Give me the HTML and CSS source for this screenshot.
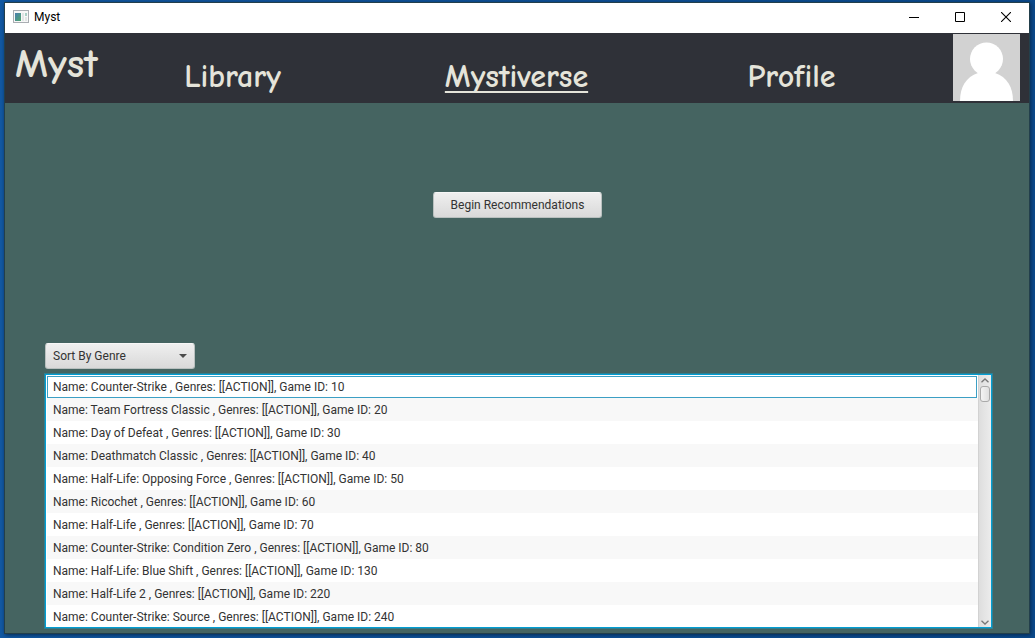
FILE: index.html
```
<!DOCTYPE html>
<html lang="en">
<head>
<meta charset="utf-8">
<title>Myst</title>
<link rel="stylesheet" href="styles.css">
</head>
<body>
<div class="window">
  <header class="titlebar">
    <svg class="app-icon" width="16" height="16" viewBox="0 0 16 16" aria-hidden="true">
      <defs><linearGradient id="pane" x1="0" y1="0" x2="1" y2="1"><stop offset="0" stop-color="#4a7fb0"/><stop offset="1" stop-color="#4fa66c"/></linearGradient></defs>
      <rect x=".5" y="1.500" width="15" height="12" fill="#f7f7f7" stroke="#a9adb2"/>
      <rect x="2" y="4" width="6" height="8" fill="url(#pane)"/>
      <rect x="9" y="4" width="2" height="8" fill="#e1e5e5"/>
      <rect x="12" y="4" width="2" height="3" fill="#a9cfc6"/>
      <rect x="12" y="8" width="2" height="4" fill="#e1e5e5"/>
    </svg>
    <span class="title">Myst</span>
    <button class="caption" aria-label="Minimize"><svg width="10" height="10" viewBox="0 0 10 10"><path d="M0 5.5h10" stroke="#000"/></svg></button>
    <button class="caption" aria-label="Maximize"><svg width="10" height="10" viewBox="0 0 10 10"><path d="M.5.5h9v9h-9z" fill="none" stroke="#000"/></svg></button>
    <button class="caption" aria-label="Close"><svg width="10" height="10" viewBox="0 0 10 10"><path d="M0 0l10 10M10 0L0 10" stroke="#000" stroke-width="1.1"/></svg></button>
  </header>
  <nav class="nav">
    <span class="brand">Myst</span>
    <a class="link" href="#library">Library</a>
    <a class="link active" href="#mystiverse">Mystiverse</a>
    <a class="link" href="#profile">Profile</a>
    <svg class="avatar" width="67" height="67" viewBox="0 0 67 67" role="img" aria-label="Profile picture">
      <rect width="67" height="67" fill="#d2d2d2"/>
      <circle cx="33.5" cy="25" r="16.5" fill="#fff"/>
      <path d="M25 39C13 43 7 53 7 67h53C60 53 54 43 42 39z" fill="#fff"/>
    </svg>
  </nav>
  <main class="content">
    <section class="start"><button class="begin">Begin Recommendations</button></section>
    <div class="sort">
      <select class="sort-select" aria-label="Sort games"><option>Sort By Genre</option></select>
      <svg class="sort-arrow" width="8" height="4" viewBox="0 0 8 4" aria-hidden="true"><path d="M0 0h8L4 4z" fill="#4b4b4b"/></svg>
    </div>
    <div class="list">
      <ul class="rows">
        <li class="row selected">Name: Counter-Strike , Genres: [[ACTION]], Game ID: 10</li>
        <li class="row">Name: Team Fortress Classic , Genres: [[ACTION]], Game ID: 20</li>
        <li class="row">Name: Day of Defeat , Genres: [[ACTION]], Game ID: 30</li>
        <li class="row">Name: Deathmatch Classic , Genres: [[ACTION]], Game ID: 40</li>
        <li class="row">Name: Half-Life: Opposing Force , Genres: [[ACTION]], Game ID: 50</li>
        <li class="row">Name: Ricochet , Genres: [[ACTION]], Game ID: 60</li>
        <li class="row">Name: Half-Life , Genres: [[ACTION]], Game ID: 70</li>
        <li class="row">Name: Counter-Strike: Condition Zero , Genres: [[ACTION]], Game ID: 80</li>
        <li class="row">Name: Half-Life: Blue Shift , Genres: [[ACTION]], Game ID: 130</li>
        <li class="row">Name: Half-Life 2 , Genres: [[ACTION]], Game ID: 220</li>
        <li class="row">Name: Counter-Strike: Source , Genres: [[ACTION]], Game ID: 240</li>
      </ul>
      <div class="scrollbar">
        <button class="step" aria-label="Scroll up"><svg width="8" height="5" viewBox="0 0 8 5"><path d="M.5 4.2L4 1l3.500 3.200" fill="none" stroke="#777" stroke-width="1.300"/></svg></button>
        <div class="track"><div class="thumb"></div></div>
        <button class="step" aria-label="Scroll down"><svg width="8" height="5" viewBox="0 0 8 5"><path d="M.5.8L4 4 7.500.8" fill="none" stroke="#777" stroke-width="1.300"/></svg></button>
      </div>
    </div>
  </main>
</div>
</body>
</html>
```
FILE: styles.css
```
* { box-sizing: border-box; }
body {
  margin: 0;
  height: 100vh;
  padding: 3px 6px 5px 5px;
  background: linear-gradient(90deg, #1259a3, #0b4a8c);
  font-family: "Segoe UI", Roboto, "Noto Sans", sans-serif;
  font-size: 12px;
  color: #333;
}
button, select { font: inherit; color: inherit; }
.window {
  height: 100%;
  display: flex;
  flex-direction: column;
  background: #456461;
  box-shadow: 0 0 0 1px #233f4b, 1px 1px 4px 1px #06294f;
}
.titlebar {
  height: 30px;
  flex: none;
  display: flex;
  align-items: center;
  padding: 0 0 2px 8px;
  background: #fff;
  color: #000;
}
.title { flex: 1; padding-left: 5px; }
.caption {
  width: 46px;
  height: 28px;
  padding: 0;
  border: 0;
  background: none;
  display: flex;
  align-items: center;
  justify-content: center;
}
.nav {
  height: 70px;
  flex: none;
  display: grid;
  grid-template-columns: 83px 269fr 299fr 251fr 36fr 67px;
  padding: 1px 9px 0 10px;
  background: #2f3138;
  color: #e5e4da;
  font-family: "Comic Sans MS", "Comic Neue", Lato, sans-serif;
  font-weight: 700;
}
.brand { font-size: 41px; line-height: 60px; }
.link {
  justify-self: center;
  align-self: start;
  padding-top: 25px;
  font-size: 32px;
  line-height: 36px;
  color: inherit;
  text-decoration: none;
}
.active {
  text-decoration: underline;
  text-decoration-thickness: 2px;
  text-underline-offset: 4px;
  text-decoration-skip-ink: none;
}
.avatar { grid-column: 6; }
.content {
  flex: 1;
  min-height: 0;
  display: flex;
  flex-direction: column;
  padding: 0 37px 5px 40px;
}
.start {
  height: 240px;
  flex: none;
  display: flex;
  align-items: flex-start;
  justify-content: center;
  padding: 89px 2px 0 0;
}
.begin, .sort-select {
  height: 26px;
  border: 1px solid #b9c0bf;
  border-top-color: #f7f7f7;
  border-radius: 3px;
  background: linear-gradient(#efefef, #d9d9d9);
}
.begin { width: 169px; padding: 0; }
.sort {
  width: 150px;
  flex: none;
  display: grid;
  align-items: center;
  margin-bottom: 5px;
}
.sort-select {
  grid-area: 1 / 1;
  appearance: none;
  padding: 0 24px 0 7px;
}
.sort-arrow {
  grid-area: 1 / 1;
  justify-self: end;
  margin-right: 8px;
  pointer-events: none;
}
.list {
  flex: 1;
  min-height: 0;
  display: flex;
  border: 1px solid #039ed3;
  background: #fff;
  box-shadow: 0 0 0 1px #2e7f92;
}
.rows {
  flex: 1;
  margin: 0;
  padding: 1px 0 0 1px;
  list-style: none;
  overflow: hidden;
}
.row {
  height: 23px;
  padding-left: 6px;
  line-height: 24px;
  white-space: nowrap;
}
.row:nth-child(even) { background: #f8f8f8; }
.selected {
  height: 22px;
  margin-right: 1px;
  padding-left: 5px;
  line-height: 20px;
  border: 1px solid #3c9fc4;
}
.scrollbar {
  width: 13px;
  display: flex;
  flex-direction: column;
  border-left: 1px solid #d2d2d2;
  background: linear-gradient(90deg, #dedede, #ececec);
}
.step {
  height: 10px;
  padding: 0;
  border: 0;
  background: none;
  display: flex;
  align-items: center;
  justify-content: center;
}
.track { flex: 1; padding: 1px; }
.thumb {
  height: 16px;
  border: 1px solid #aaa;
  border-radius: 3px;
  background: linear-gradient(90deg, #f4f4f4, #e0e0e0);
}
```
